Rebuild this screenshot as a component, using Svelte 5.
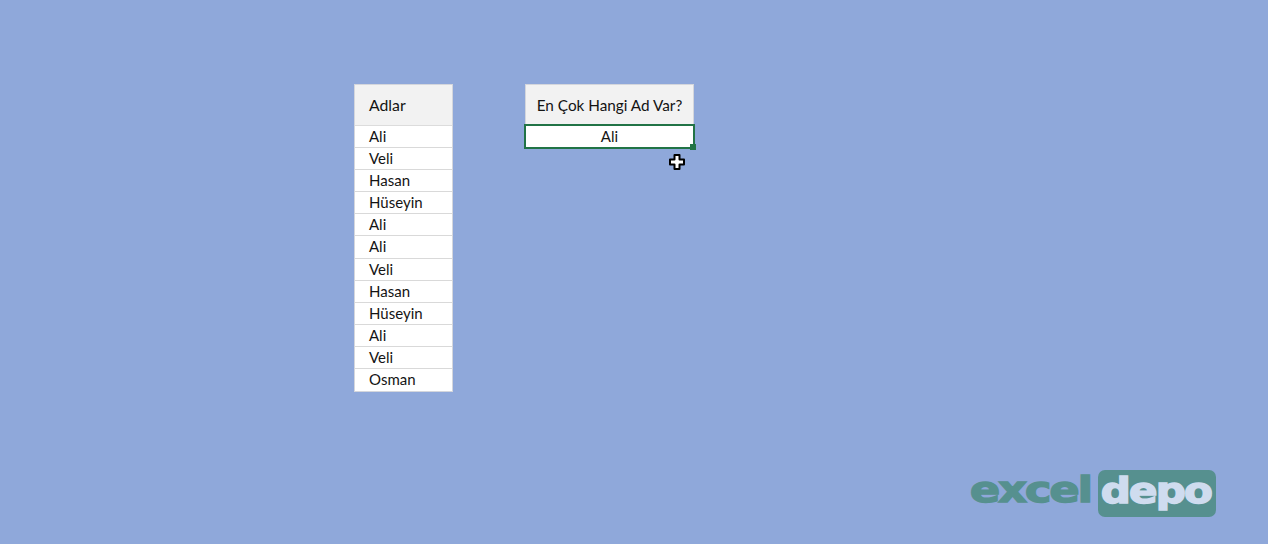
<script>
  const names = ['Ali','Veli','Hasan','Hüseyin','Ali','Ali','Veli','Hasan','Hüseyin','Ali','Veli','Osman'];
</script>

<div class="page">
  <div class="sheets">
    <div class="names">
      <div class="head">Adlar</div>
      {#each names as n}
        <div class="row">{n}</div>
      {/each}
    </div>
    <div class="result">
      <div class="head center">En Çok Hangi Ad Var?</div>
      <div class="selected">Ali<span class="handle"></span>
        <svg class="cursor" width="16" height="16" viewBox="0 0 16 16">
          <path d="M5.5 1h5v4.5H15v5h-4.5V15h-5v-4.5H1v-5h4.5z" fill="#fff" stroke="#000" stroke-width="2" stroke-linejoin="round"/>
        </svg>
      </div>
    </div>
  </div>
  <div class="logo">
    <span class="excel">excel</span>
    <span class="depo"><span class="depo-text">depo</span></span>
  </div>
</div>

<style>
  :global(body) { margin: 0; }
  .page {
    box-sizing: border-box;
    width: 1268px;
    height: 544px;
    padding: 84px 52px 27px 354px;
    background: #8fa8da;
    display: flex;
    flex-direction: column;
    font-family: Lato, "Open Sans", sans-serif;
    color: #141414;
    overflow: hidden;
  }
  .sheets { display: flex; align-items: flex-start; gap: 71px; }
  .names {
    width: 99px;
    box-sizing: border-box;
    border: 1px solid #d4d6dc;
    background: #fff;
    font-size: 15px;
  }
  .result { width: 171px; position: relative; font-size: 15px; }
  .head {
    height: 39.6px;
    display: flex;
    align-items: center;
    padding-left: 14px;
    background: #f2f2f2;
    border-bottom: 1px solid #dcdcdc;
    font-size: 15.8px;
  }
  .result .head {
    width: 167px;
    margin-left: 1px;
    height: 39px;
    border: 1px solid #d4d6dc;
    border-bottom: 0;
    padding-left: 0;
    justify-content: center;
    font-size: 15.3px;
  }
  .row {
    box-sizing: border-box;
    height: 22.17px;
    line-height: 21.8px;
    padding-left: 14px;
    border-bottom: 1px solid #d9d9d9;
  }
  .row:last-child { border-bottom: 0; }
  .selected {
    box-sizing: border-box;
    height: 25px;
    border: 2px solid #217346;
    background: #fff;
    text-align: center;
    line-height: 21px;
    position: relative;
  }
  .handle {
    position: absolute;
    right: -3px;
    bottom: -3px;
    width: 6px;
    height: 6px;
    background: #217346;
  }
  .cursor { position: absolute; left: 143px; top: 28px; display: block; }
  .logo {
    margin-top: auto;
    align-self: flex-end;
    display: flex;
    align-items: center;
    height: 47px;
    font-family: "DejaVu Sans", sans-serif;
    font-weight: 700;
    line-height: 1;
  }
  .excel {
    color: #56908f;
    font-size: 35px;
    letter-spacing: -1.5px;
    -webkit-text-stroke: 1.5px #56908f;
    width: 128px;
    transform: scaleX(1.27) translateY(-3px);
    transform-origin: left center;
  }
  .depo {
    width: 118px;
    height: 47px;
    box-sizing: border-box;
    border-radius: 7px;
    background: #56908f;
    display: flex;
    align-items: center;
    justify-content: center;
    color: #cfdcef;
    font-size: 35px;
    letter-spacing: -1.5px;
    -webkit-text-stroke: 1.5px #cfdcef;
  }
  .depo-text { transform: translateX(-1px) scaleX(1.2) translateY(-2px); }
</style>
